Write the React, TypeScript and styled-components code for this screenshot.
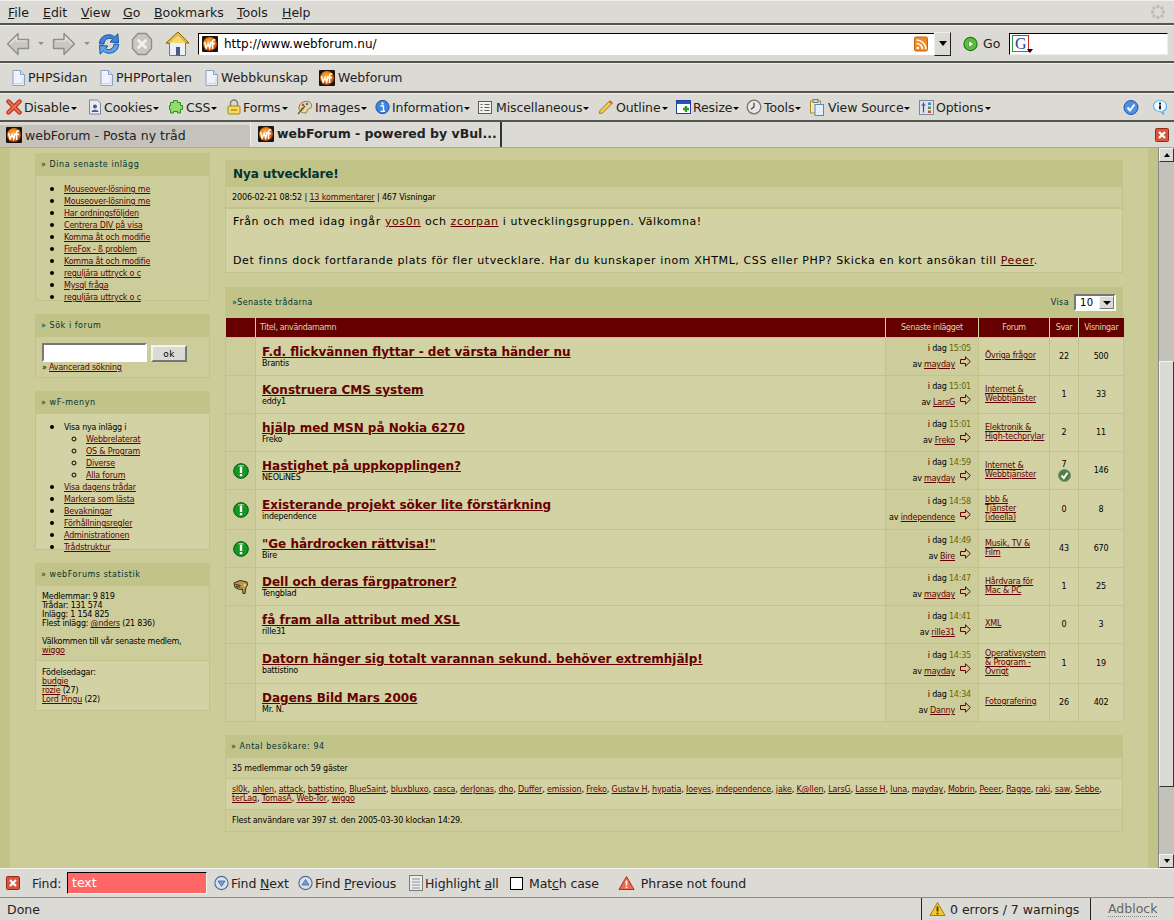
import React from "react";
import styled, { createGlobalStyle } from "styled-components";

const GlobalStyle = createGlobalStyle`
  html, body {
    margin: 0;
    padding: 0;
    height: 100%;
    overflow: hidden;
    background: #dcdad5;
    font-family: "DejaVu Sans", Verdana, sans-serif;
  }
`;

const Favicon: React.FC<{ size?: number }> = ({ size = 16 }) => (
  <svg width={size} height={size} viewBox="0 0 16 16" style={{ flex: "none" }}>
    <defs>
      <radialGradient id="wfg" cx="0.45" cy="0.4" r="0.65">
        <stop offset="0" stopColor="#ffc23a" />
        <stop offset="0.7" stopColor="#e0620f" />
        <stop offset="1" stopColor="#8c2a08" />
      </radialGradient>
    </defs>
    <rect width="16" height="16" rx="1" fill="#1c1408" />
    <circle cx="8" cy="8" r="7" fill="url(#wfg)" />
    <path d="M2.5 6l1.6 6 2-4.5 1.6 4.5 1.5-6" fill="none" stroke="#fff" strokeWidth="1.5" />
    <path d="M10.6 13V5.5c0-1.4 1-1.9 2.6-1.7M9.4 7.6h3.6" fill="none" stroke="#fff" strokeWidth="1.5" />
  </svg>
);

const PageIcon = () => (
  <svg width="13" height="16" viewBox="0 0 13 16" style={{ flex: "none" }}>
    <path d="M1 .5h7.5l4 4v11H1z" fill="#eef3fb" stroke="#8ca0c4" />
    <path d="M8.5.5v4h4" fill="#cfdcf0" stroke="#8ca0c4" />
    <path d="M2.5 13.5h8.5V7" fill="none" stroke="#c6d5ee" />
  </svg>
);

const BackIcon: React.FC<{ flip?: boolean }> = ({ flip }) => (
  <svg width="24" height="26" viewBox="0 0 24 26" style={flip ? { transform: "scaleX(-1)" } : undefined}>
    <path d="M1.5 13L12 2.5v6h10.5v9H12v6z" fill="#c9c7c1" stroke="#8f8e89" strokeWidth="1.4" strokeLinejoin="round" />
    <path d="M4 13l6.5-6.5V10h10" fill="none" stroke="#e6e5e1" strokeWidth="1.2" />
  </svg>
);

const ReloadIcon = () => (
  <svg width="24" height="26" viewBox="0 0 24 26">
    <path d="M2.5 13C2.500 7 7 3.500 12.500 3.800c2.300.1 3.700.9 5.200 2.100L20.800 2.800 21.500 11.500 13 11 15.700 8.400c-3.800-2.500-8.500-.4-8.700 4.600z" fill="#3c84dc" stroke="#1b4f9c" strokeWidth="1" strokeLinejoin="round" />
    <path d="M21.500 13c0 6-4.500 9.500-10 9.200-2.300-.1-3.700-.9-5.200-2.100L3.200 23.200 2.500 14.500 11 15l-2.700 2.600c3.800 2.500 8.500.4 8.700-4.600z" fill="#5aa5ee" stroke="#1b4f9c" strokeWidth="1" strokeLinejoin="round" />
  </svg>
);

const StopIcon = () => (
  <svg width="22" height="24" viewBox="0 0 22 24">
    <path d="M7 1.500h8L20.500 7.500v9L15 22.500H7L1.500 16.500v-9z" fill="#c9c7c1" stroke="#8f8e89" strokeWidth="1.4" />
    <path d="M7.500 8.500l7 7M14.500 8.500l-7 7" stroke="#f2f1ee" strokeWidth="2.800" strokeLinecap="round" />
  </svg>
);

const HomeIcon = () => (
  <svg width="25" height="28" viewBox="0 0 25 28">
    <path d="M4.500 12v13.500h16V12" fill="#eef0f6" stroke="#6f7690" />
    <rect x="11" y="17" width="4" height="8.500" fill="#4a5a80" />
    <path d="M1 13L13 2l11 11-3 0-8-7.500L4 13.500z" fill="#e9c03d" stroke="#7d6415" strokeLinejoin="round" />
    <path d="M4 13l9-8 8 8z" fill="#f3d873" />
  </svg>
);

const RssIcon = () => (
  <svg width="14" height="16" viewBox="0 0 14 16">
    <rect x="0.500" y="1" width="13" height="14" rx="1.500" fill="#f08a24" stroke="#c56412" />
    <circle cx="3.800" cy="12" r="1.300" fill="#fff" />
    <path d="M2.500 7.500a6 6 0 016 5.800M2.500 4a9.500 9.500 0 019.500 9.300" fill="none" stroke="#fff" strokeWidth="1.600" />
  </svg>
);

const GoIcon = () => (
  <svg width="15" height="16" viewBox="0 0 15 16">
    <circle cx="7.500" cy="8" r="6.600" fill="#5cc23d" stroke="#267a1c" strokeWidth="1.200" />
    <path d="M5.700 4.500v7l5.200-3.500z" fill="#f3fbea" stroke="#267a1c" strokeWidth="0.600" />
  </svg>
);

const SpinnerIcon = () => (
  <svg width="16" height="16" viewBox="0 0 16 16" fill="#bdbbb5">
    <circle cx="8" cy="2.500" r="1.700" /><circle cx="12" cy="4" r="1.700" /><circle cx="13.500" cy="8" r="1.700" />
    <circle cx="12" cy="12" r="1.700" /><circle cx="8" cy="13.500" r="1.700" /><circle cx="4" cy="12" r="1.700" />
    <circle cx="2.500" cy="8" r="1.700" /><circle cx="4" cy="4" r="1.700" />
  </svg>
);

const DevIcon: React.FC<{ kind: string }> = ({ kind }) => {
  switch (kind) {
    case "disable":
      return (
        <svg width="16" height="16" viewBox="0 0 16 16">
          <path d="M2.500 2.500l11 11M13.500 2.500l-11 11" stroke="#b52c18" strokeWidth="4.400" strokeLinecap="round" />
          <path d="M2.500 2.500l11 11M13.500 2.500l-11 11" stroke="#ef6a4c" strokeWidth="2.400" strokeLinecap="round" />
        </svg>
      );
    case "cookies":
      return (
        <svg width="14" height="16" viewBox="0 0 14 16">
          <path d="M1.500 1h8l3 3v11h-11z" fill="#e8ecf6" stroke="#7a86a8" />
          <circle cx="7" cy="7.500" r="2" fill="#4b5d85" />
          <path d="M3.500 13c0-3 7-3 7 0z" fill="#4b5d85" />
        </svg>
      );
    case "css":
      return (
        <svg width="16" height="16" viewBox="0 0 16 16">
          <path d="M5.500 1.500h4v2h3v3h2v4h-2v3.500h-3v-1.500h-4V14H2.500v-3.500h-1v-4h1v-3h3z" fill="#8fdc6c" stroke="#2e8a24" strokeLinejoin="round" />
        </svg>
      );
    case "forms":
      return (
        <svg width="14" height="16" viewBox="0 0 14 16">
          <path d="M3.500 7V4.500a3.500 3.500 0 017 0V7" fill="none" stroke="#7b7b78" strokeWidth="1.400" />
          <rect x="1" y="7" width="12" height="8" rx="1" fill="#f4d860" stroke="#a78714" />
          <rect x="4" y="10" width="6" height="2" fill="#c8a520" />
        </svg>
      );
    case "images":
      return (
        <svg width="16" height="16" viewBox="0 0 16 16">
          <path d="M8 2.500c4-1 7 1.500 6.500 5-.4 2.500-3 1.500-4 3-.8 1.300 0 3.500-2.500 3.500C4 14 1.500 11 2 8s3-4.900 6-5.500z" fill="#ecd9a8" stroke="#8a7440" />
          <circle cx="6" cy="6" r="1.300" fill="#d9432a" /><circle cx="10" cy="5" r="1.300" fill="#3b77c8" />
          <circle cx="5" cy="10" r="1.300" fill="#46a336" /><path d="M1 15l7-8" stroke="#6b5a30" strokeWidth="1.300" />
        </svg>
      );
    case "info":
      return (
        <svg width="15" height="16" viewBox="0 0 15 16">
          <circle cx="7.500" cy="8" r="6.600" fill="#3f85e0" stroke="#1c4f9e" />
          <rect x="6.500" y="3.500" width="2" height="2" fill="#fff" /><path d="M5.500 7h3v5h1.500M5.500 12.300h4" stroke="#fff" strokeWidth="1.300" fill="none" />
        </svg>
      );
    case "misc":
      return (
        <svg width="16" height="16" viewBox="0 0 16 16">
          <rect x="0.500" y="2.500" width="13" height="12" fill="#f2f2f0" stroke="#5c5c5c" />
          <path d="M2.500 5.500h2m2 0h5M2.500 8.500h2m2 0h5M2.500 11.500h2m2 0h5" stroke="#5c5c5c" />
        </svg>
      );
    case "outline":
      return (
        <svg width="16" height="16" viewBox="0 0 16 16">
          <path d="M2 11.500L11.500 2l2.500 2.500L4.500 14 1.500 14.500z" fill="#f4cd4c" stroke="#9a7a16" />
          <path d="M11.500 2l2.500 2.500" stroke="#d9533a" strokeWidth="2" />
        </svg>
      );
    case "resize":
      return (
        <svg width="15" height="16" viewBox="0 0 15 16">
          <rect x="0.500" y="1.500" width="14" height="13" fill="#fff" stroke="#1f3fa8" />
          <rect x="1" y="2" width="13" height="3" fill="#2552c8" />
          <path d="M10 7v6M7 10h6" stroke="#2f9a2a" strokeWidth="2.400" />
        </svg>
      );
    case "tools":
      return (
        <svg width="16" height="16" viewBox="0 0 16 16">
          <circle cx="8" cy="8" r="6.800" fill="#e8e7e3" stroke="#77756f" strokeWidth="1.300" />
          <path d="M8 3.800V8L5 10.300" fill="none" stroke="#35342f" strokeWidth="1.100" />
        </svg>
      );
    case "source":
      return (
        <svg width="16" height="17" viewBox="0 0 16 17">
          <rect x="0.500" y="2" width="10" height="12" fill="#f6e6b0" stroke="#b08a24" />
          <rect x="3" y="0.500" width="5" height="3" fill="#d8d6d0" stroke="#7b7b78" />
          <rect x="5" y="5.500" width="8.500" height="11" fill="#e3eefb" stroke="#5a86c4" />
        </svg>
      );
    default:
      return (
        <svg width="15" height="16" viewBox="0 0 15 16">
          <rect x="0.500" y="1.500" width="14" height="14" fill="#dde4ef" stroke="#7c88a0" />
          <path d="M4.500 3.500v10M2.500 6h4" stroke="#36507c" strokeWidth="1.200" />
          <rect x="9" y="3.500" width="3" height="2.500" fill="#4a7fd0" /><rect x="9" y="7.500" width="3" height="2.500" fill="#4aa040" /><rect x="9" y="11.500" width="3" height="2.500" fill="#d04a3a" />
        </svg>
      );
  }
};

const CheckBadge = () => (
  <svg width="16" height="17" viewBox="0 0 16 17">
    <circle cx="8" cy="8.500" r="7" fill="#4f90e6" stroke="#1c58a8" />
    <path d="M4.500 8.500l2.500 3 4.500-6" fill="none" stroke="#fff" strokeWidth="2" />
  </svg>
);

const InfoBubble = () => (
  <svg width="16" height="17" viewBox="0 0 16 17">
    <path d="M8 1.500c3.800 0 6.500 2.400 6.500 5.700 0 2.500-1.500 4.300-3.800 5L12 15.500l-3.500-3C4.500 12.600 1.500 10.500 1.500 7.200 1.500 3.900 4.200 1.500 8 1.500z" fill="#eef8ff" stroke="#58b4ea" strokeWidth="1.200" />
    <rect x="7" y="3.600" width="2" height="2" fill="#1c1c1c" /><rect x="7" y="6.500" width="2" height="3.800" fill="#1c1c1c" />
  </svg>
);

const CloseBox: React.FC = () => (
  <svg width="14" height="14" viewBox="0 0 14 14">
    <rect x="0.500" y="0.500" width="13" height="13" rx="1" fill="#d9543c" stroke="#9a2a18" />
    <path d="M4 4l6 6M10 4l-6 6" stroke="#fff" strokeWidth="2.200" />
  </svg>
);

const ArrowCircle: React.FC<{ up?: boolean }> = ({ up }) => (
  <svg width="15" height="16" viewBox="0 0 15 16">
    <circle cx="7.500" cy="8" r="6.600" fill="#d6e0f0" stroke="#52688c" strokeWidth="1.100" />
    <path d={up ? "M7.500 4.500l3.500 5.500h-7z" : "M7.500 11.500L4 6h7z"} fill="#7c9cd0" stroke="#3c5a8c" strokeWidth="0.700" />
  </svg>
);

const HighlightIcon = () => (
  <svg width="14" height="16" viewBox="0 0 14 16">
    <rect x="0.500" y="0.500" width="13" height="15" fill="#ecebe8" stroke="#7a7a78" />
    <path d="M3 4h8M3 7h8M3 10h8M3 13h8" stroke="#8a92a6" />
  </svg>
);

const WarnIcon: React.FC<{ yellow?: boolean }> = ({ yellow }) => (
  <svg width="17" height="16" viewBox="0 0 17 16">
    <path d="M8.500 1.500L16 14.500H1z" fill={yellow ? "#f5c832" : "#f0694c"} stroke={yellow ? "#a07c10" : "#a8341e"} strokeLinejoin="round" />
    <path d="M8.500 5.500v5M8.500 11.800v1.400" stroke={yellow ? "#3c3008" : "#fff"} strokeWidth="1.700" />
  </svg>
);

const NewPostIcon = () => (
  <svg width="16" height="16" viewBox="0 0 16 16">
    <circle cx="8" cy="8" r="7.300" fill="#129a20" stroke="#0d4a18" strokeWidth="1" />
    <path d="M5 3a6 4 0 016 0" stroke="#9ee09e" fill="none" />
    <path d="M8 3.500v6.500" stroke="#fff" strokeWidth="2.400" />
    <rect x="6.800" y="11" width="2.400" height="2.300" fill="#fff" />
  </svg>
);

const HandIcon = () => (
  <svg width="16" height="16" viewBox="0 0 16 16">
    <path d="M1 4l6-2.500 7 1.500.5 3.500L13 8l-1 6.500h-2l-.5-4.500-3 .5L2 8.500z" fill="#b89a50" stroke="#3c2c10" />
    <path d="M2.500 5.500l5 1M3 7.500l4.500.8" stroke="#3c2c10" />
    <path d="M10.500 5l2.500.5-1 3z" fill="#f5e08a" />
  </svg>
);

const SolvedIcon = () => (
  <svg width="13" height="13" viewBox="0 0 13 13" style={{ display: "block", margin: "0 auto" }}>
    <circle cx="6.500" cy="6.500" r="6" fill="#4f7f47" stroke="#7c8f68" />
    <path d="M3.500 6.500l2.300 2.600 3.700-5.400" fill="none" stroke="#fff" strokeWidth="1.900" />
  </svg>
);

const LastPostArrow = () => (
  <svg width="11" height="11" viewBox="0 0 11 11" style={{ flex: "none", marginBottom: 7 }}>
    <path d="M.5 3.500h5V.8L10.300 5.500 5.500 10.200V7.500h-5z" fill="none" stroke="#660000" strokeWidth="1" />
  </svg>
);

const Shell = styled.div`
  width: 1174px;
  height: 920px;
  display: flex;
  flex-direction: column;
  overflow: hidden;
  background: #dcdad5;
  color: #000;
  font-size: 13px;
`;

const ChromeBar = styled.div<{ $h: number; $px?: number }>`
  height: ${p => p.$h}px;
  flex: none;
  display: flex;
  align-items: center;
  padding: 0 ${p => p.$px ?? 0}px;
  border-bottom: 2px solid #555550;
  box-sizing: content-box;
  position: relative;
  background: #dcdad5;
  border-top: 1px solid #f0efec;
  & svg {
    flex: none;
  }
`;

const MenuItem = styled.span<{ $w: number }>`
  width: ${p => p.$w}px;
  flex: none;
  font-size: 12.5px;
  color: #1a1a1a;
`;

const Grow = styled.div`
  flex: 1;
`;

const NavButton = styled.div<{ $w: number }>`
  width: ${p => p.$w}px;
  flex: none;
  display: flex;
  align-items: center;
`;

const DropTick = styled.span<{ $dark?: boolean }>`
  width: 0;
  height: 0;
  border-left: 3px solid transparent;
  border-right: 3px solid transparent;
  border-top: 3px solid ${p => (p.$dark ? "#000" : "#8f8e89")};
  display: inline-block;
  flex: none;
`;

const UrlBox = styled.div`
  width: 736px;
  height: 22px;
  flex: none;
  background: #fff;
  border: 1px solid #000;
  border-right: none;
  border-bottom-color: #fff;
  box-sizing: border-box;
  display: flex;
  align-items: center;
  padding: 0 6px 0 3px;
  gap: 6px;
  font-size: 12px;
`;

const UrlDrop = styled.div`
  width: 17px;
  height: 24px;
  flex: none;
  box-sizing: border-box;
  border: 1px solid;
  border-color: #f0efec #222 #222 #f0efec;
  display: flex;
  align-items: center;
  justify-content: center;
  & > span {
    border-left-width: 4px;
    border-right-width: 4px;
    border-top-width: 5px;
  }
`;

const GoLabel = styled.span`
  font-size: 12.5px;
  margin-left: 5px;
  color: #222;
`;

const SearchBox = styled.div`
  width: 159px;
  height: 22px;
  flex: none;
  margin-left: 9px;
  background: #fff;
  border: 1px solid #000;
  border-right-color: #eee;
  border-bottom-color: #eee;
  box-sizing: border-box;
  display: flex;
  align-items: center;
  padding-left: 2px;
`;

const GoogleMark = styled.span`
  width: 15px;
  height: 15px;
  border: 1px solid #2a9a3c;
  border-right-color: #d02a20;
  border-top-color: #3060c0;
  color: #1f3fb0;
  font-family: "Liberation Serif", serif;
  font-size: 16px;
  line-height: 15px;
  text-align: center;
  position: relative;
  &::after {
    content: "";
    position: absolute;
    right: -5px;
    bottom: -2px;
    border-left: 3px solid transparent;
    border-right: 3px solid transparent;
    border-top: 4px solid #000;
  }
`;

const Bookmark = styled.span<{ $w: number }>`
  width: ${p => p.$w}px;
  flex: none;
  display: flex;
  align-items: center;
  gap: 3px;
  font-size: 12.5px;
  color: #222;
`;

const DevItem = styled.span<{ $w: number }>`
  width: ${p => p.$w}px;
  flex: none;
  display: flex;
  align-items: center;
  gap: 2px;
  font-size: 12.5px;
  color: #222;
  letter-spacing: -0.1px;
`;

const DevCaret = styled(DropTick)`
  margin-left: -1px;
  margin-top: 2px;
`;

const TabRow = styled.div`
  height: 25px;
  flex: none;
  display: flex;
  align-items: flex-end;
  background: #dcdad5;
  border-bottom: 1px solid #a8a69f;
  box-sizing: content-box;
  position: relative;
`;

const Tab = styled.div<{ $active?: boolean }>`
  width: ${p => (p.$active ? 252 : 250)}px;
  height: ${p => (p.$active ? 25 : 22)}px;
  box-sizing: border-box;
  flex: none;
  display: flex;
  align-items: center;
  gap: 3px;
  padding-left: ${p => (p.$active ? 7 : 6)}px;
  padding-bottom: 2px;
  font-size: 12.5px;
  font-weight: ${p => (p.$active ? 700 : 400)};
  background: ${p => (p.$active ? "#dcdad5" : "#c4c2bb")};
  border-right: ${p => (p.$active ? "2px solid #333" : "none")};
  border-left: ${p => (p.$active ? "1px solid #f0efec" : "none")};
  color: #222;
`;

const TabClose = styled.div`
  margin-left: auto;
  margin-right: 5px;
  align-self: center;
  display: flex;
`;

const Viewport = styled.div`
  flex: 1;
  min-height: 0;
  display: flex;
  overflow: hidden;
`;

const PageArea = styled.div`
  flex: 1;
  display: flex;
  align-items: flex-start;
  background: #cccc99;
  border-left: 10px solid #c2c388;
  border-right: 10px solid #c2c388;
  padding: 5px 25px 0;
  gap: 15px;
  overflow: hidden;
  font-size: 8px;
  color: #000;
`;

const Sidebar = styled.div`
  width: 175px;
  flex: none;
  display: flex;
  flex-direction: column;
  gap: 13px;
`;

const MainColumn = styled.div`
  width: 898px;
  flex: none;
  margin-top: 7px;
  display: flex;
  flex-direction: column;
  gap: 14px;
`;

const Box = styled.div``;

const VisitorBox = styled.div`
  margin-top: -1px;
`;

const BoxHead = styled.div<{ $h?: number }>`
  height: ${p => p.$h ?? 23}px;
  box-sizing: border-box;
  background: #c2c388;
  padding: 0 6px;
  display: flex;
  align-items: center;
  color: #003333;
  font-size: 8px;
  letter-spacing: 0.55px;
`;

const BoxBody = styled.div<{ $h: number; $light?: boolean; $pad?: string }>`
  height: ${p => p.$h}px;
  box-sizing: border-box;
  background: ${p => (p.$light ? "#d2d2a4" : "#cdcd9b")};
  border: 1px solid #c2c388;
  border-top: none;
  padding: ${p => p.$pad ?? "0 6px"};
  line-height: 9px;
  letter-spacing: -0.2px;
  white-space: nowrap;
`;

const ForumLink = styled.a`
  color: #660000;
  text-decoration: underline;
`;

const SideList = styled.ul`
  margin: 0;
  padding: 7px 0 0 28px;
  list-style: disc;
  line-height: 11px;
  letter-spacing: -0.2px;
  & li::marker {
    font-size: 12px;
  }
  & ul {
    margin: 0;
    padding-left: 22px;
    list-style: circle;
  }
`;

const SearchRow = styled.div`
  display: flex;
  align-items: flex-end;
  gap: 4px;
  height: 19px;
`;

const SearchInput = styled.input`
  width: 105px;
  height: 19px;
  box-sizing: border-box;
  background: #fff;
  border: 2px solid;
  border-color: #777 #fff #fff #777;
  padding: 0;
  outline: none;
`;

const OkButton = styled.button`
  width: 36px;
  height: 17px;
  box-sizing: border-box;
  background: #dcdad5;
  border: 2px solid;
  border-color: #f4f4f0 #777 #777 #f4f4f0;
  font: 9px "DejaVu Sans", sans-serif;
  letter-spacing: 0.5px;
  padding: 0;
  color: #000;
`;

const AdvancedRow = styled.div`
  margin-top: 1px;
`;

const NewsTitle = styled.div`
  height: 27px;
  background: #c2c388;
  display: flex;
  align-items: center;
  padding-left: 8px;
  color: #003333;
  font-size: 12px;
  font-weight: 700;
  letter-spacing: -0.1px;
`;

const NewsBody = styled.div`
  height: 65px;
  box-sizing: border-box;
  background: #d2d2a4;
  border: 1px solid #c2c388;
  padding: 3px 7px;
  font-size: 11px;
  line-height: 19.500px;
  letter-spacing: 0.6px;
  white-space: nowrap;
`;

const MetaRow = styled.div<{ $h: number; $light?: boolean; $ls?: number }>`
  height: ${p => p.$h}px;
  box-sizing: border-box;
  background: ${p => (p.$light ? "#d2d2a4" : "#cdcd9b")};
  border: 1px solid #c2c388;
  border-top: none;
  padding: 0 6px;
  display: flex;
  align-items: center;
  letter-spacing: ${p => p.$ls ?? -0.13}px;
  white-space: nowrap;
  line-height: 9px;
`;

const ThreadHead = styled.div`
  height: 31px;
  background: #c2c388;
  display: flex;
  align-items: center;
  justify-content: space-between;
  padding: 0 7px;
  color: #003333;
  letter-spacing: 0.4px;
`;

const ShowBox = styled.div`
  display: flex;
  align-items: center;
  gap: 5px;
`;

const SelectBox = styled.div`
  width: 42px;
  height: 17px;
  box-sizing: border-box;
  background: #fff;
  border: 2px solid;
  border-color: #777 #fff #fff #777;
  display: flex;
  align-items: center;
  justify-content: space-between;
  color: #000;
  font-size: 10px;
  padding-left: 4px;
`;

const SelectArrow = styled.span`
  width: 15px;
  height: 13px;
  box-sizing: border-box;
  background: #dcdad5;
  border: 1px solid;
  border-color: #f4f4f0 #777 #777 #f4f4f0;
  display: flex;
  align-items: center;
  justify-content: center;
  & > span {
    border-left-width: 4px;
    border-right-width: 4px;
    border-top-width: 4px;
  }
`;

const ThreadTable = styled.table`
  width: 898px;
  table-layout: fixed;
  border-collapse: collapse;
  letter-spacing: -0.2px;
`;

const HeadCell = styled.th<{ $left?: boolean }>`
  height: 19px;
  padding: 0 ${p => (p.$left ? "4px" : "0")};
  background: #660000;
  color: #d8d8a8;
  font-weight: 400;
  font-size: 8px;
  letter-spacing: -0.35px;
  text-align: ${p => (p.$left ? "left" : "center")};
  border-left: 1px solid #d2d2a4;
  &:first-child {
    border-left: none;
  }
`;

const ThreadRow = styled.tr<{ $h: number }>`
  height: ${p => p.$h}px;
`;

const Cell = styled.td<{ $center?: boolean }>`
  padding: 0;
  background: #d2d2a4;
  border: 1px solid #c2c388;
  text-align: ${p => (p.$center ? "center" : "left")};
  vertical-align: middle;
  line-height: 9px;
  overflow: hidden;
  white-space: nowrap;
`;

const IconCell = styled(Cell)`
  background: #cdcd9b;
  text-align: center;
  line-height: 0;
`;

const TitleCell = styled(Cell)`
  padding-left: 6px;
`;

const ThreadTitle = styled.a`
  display: block;
  width: max-content;
  color: #660000;
  font-size: 12px;
  font-weight: 700;
  line-height: 12px;
  letter-spacing: 0;
  text-decoration: underline;
`;

const ThreadAuthor = styled.div`
  line-height: 8px;
  margin-top: 2px;
`;

const LastCell = styled(Cell)`
  background: #cdcd9b;
  padding-right: 7px;
  text-align: right;
`;

const LastTime = styled.div`
  line-height: 10px;
  margin-top: 1px;
`;

const Clock = styled.span`
  color: #666600;
`;

const LastBy = styled.div`
  display: flex;
  justify-content: flex-end;
  align-items: center;
  gap: 5px;
  margin-top: 5px;
  height: 12px;
`;

const ForumCell = styled(Cell)`
  padding: 0 0 2px 6px;
`;

const CountCell = styled(Cell)`
  background: #d2d2a4;
  text-align: center;
`;

const SideBirthdays = styled.div`
  box-sizing: border-box;
  height: 50px;
  background: #d2d2a4;
  border: 1px solid #c2c388;
  border-top: none;
  padding: 7px 6px 0;
  line-height: 9px;
  letter-spacing: -0.2px;
`;

const PageScroll = styled.div`
  width: 16px;
  flex: none;
  display: flex;
  flex-direction: column;
  background: #c3c1ba;
  border-left: 1px solid #8a8a86;
  box-sizing: border-box;
`;

const ScrollBtn = styled.div`
  height: 14px;
  flex: none;
  background: #dcdad5;
  border: 1px solid;
  border-color: #f4f4f0 #333 #333 #f4f4f0;
  box-sizing: border-box;
  display: flex;
  align-items: center;
  justify-content: center;
  & > span {
    border-left-width: 3px;
    border-right-width: 3px;
    border-top-width: 4px;
  }
`;

const ScrollBtnUp = styled(ScrollBtn)`
  & > span {
    transform: rotate(180deg);
  }
`;

const ScrollGap = styled.div<{ $h?: number }>`
  height: ${p => (p.$h ? `${p.$h}px` : "auto")};
  flex: ${p => (p.$h ? "none" : 1)};
`;

const ScrollThumb = styled.div`
  height: 426px;
  flex: none;
  box-sizing: border-box;
  background: #dcdad5;
  border: 1px solid;
  border-color: #f4f4f0 #333 #333 #f4f4f0;
`;

const FindBar = styled.div`
  height: 28px;
  flex: none;
  display: flex;
  align-items: center;
  background: #dcdad5;
  border-top: 1px solid #f4f4f0;
  border-bottom: 1px solid #8a8a86;
  font-size: 12.5px;
  color: #222;
  padding-left: 6px;
`;

const FindItem = styled.span<{ $w: number; $pl?: number }>`
  width: ${p => p.$w}px;
  padding-left: ${p => p.$pl ?? 0}px;
  box-sizing: border-box;
  flex: none;
  display: flex;
  align-items: center;
  gap: 2px;
  letter-spacing: -0.1px;
`;

const FindInput = styled.div`
  width: 140px;
  height: 22px;
  flex: none;
  box-sizing: border-box;
  background: #ff6666;
  color: #fff;
  border: 1px solid #000;
  border-right-color: #f4f4f0;
  border-bottom-color: #f4f4f0;
  padding: 2px 4px;
  font-size: 12.5px;
  line-height: 16px;
`;

const CheckSquare = styled.span`
  width: 13px;
  height: 13px;
  flex: none;
  box-sizing: border-box;
  background: #fff;
  border: 1px solid #000;
  margin-right: 4px;
`;

const StatusBar = styled.div`
  height: 22px;
  flex: none;
  display: flex;
  align-items: stretch;
  font-size: 12.5px;
  color: #222;
  background: #dcdad5;
`;

const StatusCell = styled.div<{ $w?: number }>`
  ${p => (p.$w ? `width: ${p.$w}px; flex: none;` : "flex: 1;")}
  box-sizing: border-box;
  display: flex;
  align-items: center;
  padding-left: 7px;
  gap: 4px;
  border-left: ${p => (p.$w ? "1px solid #222" : "none")};
`;

const AdblockText = styled.span`
  color: #66655f;
  margin-left: 10px;
  border-bottom: 1px dotted #8a8a86;
  line-height: 14px;
`;

const menu = [
  ["F", "ile", 35],
  ["E", "dit", 38],
  ["V", "iew", 42],
  ["G", "o", 31],
  ["B", "ookmarks", 83],
  ["T", "ools", 45],
  ["H", "elp", 30],
] as const;

const devItems = [
  ["disable", "Disable", 82],
  ["cookies", "Cookies", 80],
  ["css", "CSS", 59],
  ["forms", "Forms", 70],
  ["images", "Images", 78],
  ["info", "Information", 103],
  ["misc", "Miscellaneous", 120],
  ["outline", "Outline", 78],
  ["resize", "Resize", 70],
  ["tools", "Tools", 64],
  ["source", "View Source", 109],
  ["options", "Options", 120],
] as const;

const recent = [
  "Mouseover-lösning me",
  "Mouseover-lösning me",
  "Har ordningsföljden",
  "Centrera DIV på visa",
  "Komma åt och modifie",
  "FireFox - ß problem",
  "Komma åt och modifie",
  "reguljära uttryck o c",
  "Mysql fråga",
  "reguljära uttryck o c",
];

type Thread = {
  h: number;
  icon?: "new" | "hand";
  title: string;
  author: string;
  time: string;
  by: string;
  forum: string[];
  replies: string;
  views: string;
  solved?: boolean;
};

const threads: Thread[] = [
  { h: 38, title: "F.d. flickvännen flyttar - det värsta händer nu", author: "Brantis", time: "15:05", by: "mayday", forum: ["Övriga frågor"], replies: "22", views: "500" },
  { h: 38, title: "Konstruera CMS system", author: "eddy1", time: "15:01", by: "LarsG", forum: ["Internet &", "Webbtjänster"], replies: "1", views: "33" },
  { h: 38, title: "hjälp med MSN på Nokia 6270", author: "Freko", time: "15:01", by: "Freko", forum: ["Elektronik &", "High-techprylar"], replies: "2", views: "11" },
  { h: 38, icon: "new", title: "Hastighet på uppkopplingen?", author: "NEOLiNES", time: "14:59", by: "mayday", forum: ["Internet &", "Webbtjänster"], replies: "7", views: "146", solved: true },
  { h: 40, icon: "new", title: "Existerande projekt söker lite förstärkning", author: "independence", time: "14:58", by: "independence", forum: ["bbb &", "Tjänster", "(ideella)"], replies: "0", views: "8" },
  { h: 38, icon: "new", title: "\"Ge hårdrocken rättvisa!\"", author: "Bire", time: "14:49", by: "Bire", forum: ["Musik, TV &", "Film"], replies: "43", views: "670" },
  { h: 38, icon: "hand", title: "Dell och deras färgpatroner?", author: "Tengblad", time: "14:47", by: "mayday", forum: ["Hårdvara för", "Mac & PC"], replies: "1", views: "25" },
  { h: 38, title: "få fram alla attribut med XSL", author: "rille31", time: "14:41", by: "rille31", forum: ["XML"], replies: "0", views: "3" },
  { h: 40, title: "Datorn hänger sig totalt varannan sekund. behöver extremhjälp!", author: "battistino", time: "14:35", by: "mayday", forum: ["Operativsystem", "& Program -", "Övrigt"], replies: "1", views: "19" },
  { h: 38, title: "Dagens Bild Mars 2006", author: "Mr. N.", time: "14:34", by: "Danny", forum: ["Fotografering"], replies: "26", views: "402" },
];

const visitors = [
  "sl0k", "ahlen", "attack", "battistino", "BlueSaint", "bluxbluxo", "casca", "derJonas", "dho", "Duffer",
  "emission", "Freko", "Gustav H", "hypatia", "Ioeyes", "independence", "jake", "K@llen", "LarsG", "Lasse H",
  "luna", "mayday", "Mobrin", "Peeer", "Ragge", "raki", "saw", "Sebbe",
];

const visitors2 = ["terLaq", "TomasA", "Web-Tor", "wiggo"];

const App: React.FC = () => {
  return (
    <Shell>
      <GlobalStyle />
      <ChromeBar $h={22} $px={8}>
        {menu.map(([key, rest, w]) => (
          <MenuItem $w={w} key={key}>
            <u>{key}</u>
            {rest}
          </MenuItem>
        ))}
        <Grow />
        <SpinnerIcon />
      </ChromeBar>
      <ChromeBar $h={35} $px={6}>
        <NavButton $w={32}><BackIcon /></NavButton>
        <NavButton $w={14}><DropTick /></NavButton>
        <NavButton $w={32}><BackIcon flip /></NavButton>
        <NavButton $w={13}><DropTick /></NavButton>
        <NavButton $w={34}><ReloadIcon /></NavButton>
        <NavButton $w={34}><StopIcon /></NavButton>
        <NavButton $w={33}><HomeIcon /></NavButton>
        <UrlBox>
          <Favicon />
          <span>http://www.webforum.nu/</span>
          <Grow />
          <RssIcon />
        </UrlBox>
        <UrlDrop><DropTick $dark /></UrlDrop>
        <NavButton $w={12} />
        <GoIcon />
        <GoLabel>Go</GoLabel>
        <SearchBox><GoogleMark>G</GoogleMark></SearchBox>
      </ChromeBar>
      <ChromeBar $h={27} $px={12}>
        <Bookmark $w={88}><PageIcon /><span>PHPSidan</span></Bookmark>
        <Bookmark $w={105}><PageIcon /><span>PHPPortalen</span></Bookmark>
        <Bookmark $w={114}><PageIcon /><span>Webbkunskap</span></Bookmark>
        <Bookmark $w={90}><Favicon /><span>Webforum</span></Bookmark>
      </ChromeBar>
      <ChromeBar $h={26} $px={6}>
        {devItems.map(([kind, label, w]) => (
          <DevItem $w={w} key={kind}>
            <DevIcon kind={kind} />
            <span>{label}</span>
            <DevCaret $dark />
          </DevItem>
        ))}
        <Grow />
        <CheckBadge />
        <NavButton $w={13} />
        <InfoBubble />
      </ChromeBar>
      <TabRow>
        <Tab><Favicon /><span>webForum - Posta ny tråd</span></Tab>
        <Tab $active><Favicon /><span>webForum - powered by vBul...</span></Tab>
        <Grow />
        <TabClose><CloseBox /></TabClose>
      </TabRow>
      <Viewport>
        <PageArea>
          <Sidebar>
            <Box>
              <BoxHead>» Dina senaste inlägg</BoxHead>
              <BoxBody $h={125} $pad="0">
                <SideList>
                  {recent.map((item, i) => (
                    <li key={i}><ForumLink>{item}</ForumLink></li>
                  ))}
                </SideList>
              </BoxBody>
            </Box>
            <Box>
              <BoxHead>» Sök i forum</BoxHead>
              <BoxBody $h={41} $pad="6px 6px 0">
                <SearchRow>
                  <SearchInput />
                  <OkButton>ok</OkButton>
                </SearchRow>
                <AdvancedRow>» <ForumLink>Avancerad sökning</ForumLink></AdvancedRow>
              </BoxBody>
            </Box>
            <Box>
              <BoxHead>» wF-menyn</BoxHead>
              <BoxBody $h={136} $light $pad="0">
                <SideList>
                  <li>
                    Visa nya inlägg i
                    <ul>
                      <li><ForumLink>Webbrelaterat</ForumLink></li>
                      <li><ForumLink>OS &amp; Program</ForumLink></li>
                      <li><ForumLink>Diverse</ForumLink></li>
                      <li><ForumLink>Alla forum</ForumLink></li>
                    </ul>
                  </li>
                  <li><ForumLink>Visa dagens trådar</ForumLink></li>
                  <li><ForumLink>Markera som lästa</ForumLink></li>
                  <li><ForumLink>Bevakningar</ForumLink></li>
                  <li><ForumLink>Förhållningsregler</ForumLink></li>
                  <li><ForumLink>Administrationen</ForumLink></li>
                  <li><ForumLink>Trådstruktur</ForumLink></li>
                </SideList>
              </BoxBody>
            </Box>
            <Box>
              <BoxHead>» webForums statistik</BoxHead>
              <BoxBody $h={75} $pad="6px 6px 0">
                Medlemmar: 9 819<br />
                Trådar: 131 574<br />
                Inlägg: 1 154 825<br />
                Flest inlägg: <ForumLink>@nders</ForumLink> (21 836)<br />
                <br />
                Välkommen till vår senaste medlem,<br />
                <ForumLink>wiggo</ForumLink>
              </BoxBody>
              <SideBirthdays>
                Födelsedagar:<br />
                <ForumLink>budgie</ForumLink><br />
                <ForumLink>rozie</ForumLink> (27)<br />
                <ForumLink>Lord Pingu</ForumLink> (22)
              </SideBirthdays>
            </Box>
          </Sidebar>
          <MainColumn>
            <Box>
              <NewsTitle>Nya utvecklare!</NewsTitle>
              <MetaRow $h={21}>
                2006-02-21 08:52 |&nbsp;<ForumLink>13 kommentarer</ForumLink>&nbsp;| 467 Visningar
              </MetaRow>
              <NewsBody>
                Från och med idag ingår <ForumLink>yos0n</ForumLink> och <ForumLink>zcorpan</ForumLink> i utvecklingsgruppen. Välkomna!<br />
                <br />
                Det finns dock fortfarande plats för fler utvecklare. Har du kunskaper inom XHTML, CSS eller PHP? Skicka en kort ansökan till <ForumLink>Peeer</ForumLink>.
              </NewsBody>
            </Box>
            <Box>
              <ThreadHead>
                <span>»Senaste trådarna</span>
                <ShowBox>
                  <span>Visa</span>
                  <SelectBox>
                    10
                    <SelectArrow><DropTick $dark /></SelectArrow>
                  </SelectBox>
                </ShowBox>
              </ThreadHead>
              <ThreadTable>
                <colgroup>
                  <col width="30" />
                  <col width="630" />
                  <col width="93" />
                  <col width="71" />
                  <col width="29" />
                  <col width="45" />
                </colgroup>
                <thead>
                  <tr>
                    <HeadCell />
                    <HeadCell $left>Titel, användarnamn</HeadCell>
                    <HeadCell>Senaste inlägget</HeadCell>
                    <HeadCell>Forum</HeadCell>
                    <HeadCell>Svar</HeadCell>
                    <HeadCell>Visningar</HeadCell>
                  </tr>
                </thead>
                <tbody>
                  {threads.map(t => (
                    <ThreadRow $h={t.h} key={t.title}>
                      <IconCell>
                        {t.icon === "new" && <NewPostIcon />}
                        {t.icon === "hand" && <HandIcon />}
                      </IconCell>
                      <TitleCell>
                        <ThreadTitle>{t.title}</ThreadTitle>
                        <ThreadAuthor>{t.author}</ThreadAuthor>
                      </TitleCell>
                      <LastCell>
                        <LastTime>i dag <Clock>{t.time}</Clock></LastTime>
                        <LastBy>
                          <span>av <ForumLink>{t.by}</ForumLink></span>
                          <LastPostArrow />
                        </LastBy>
                      </LastCell>
                      <ForumCell>
                        {t.forum.map(line => (
                          <div key={line}><ForumLink>{line}</ForumLink></div>
                        ))}
                      </ForumCell>
                      <CountCell>
                        {t.replies}
                        {t.solved && <SolvedIcon />}
                      </CountCell>
                      <CountCell>{t.views}</CountCell>
                    </ThreadRow>
                  ))}
                </tbody>
              </ThreadTable>
            </Box>
            <VisitorBox>
              <BoxHead>» Antal besökare: 94</BoxHead>
              <MetaRow $h={21}>35 medlemmar och 59 gäster</MetaRow>
              <MetaRow $h={31} $light $ls={-0.14}>
                <div>
                  {visitors.map(v => (
                    <React.Fragment key={v}><ForumLink>{v}</ForumLink>, </React.Fragment>
                  ))}
                  <br />
                  {visitors2.map((v, i) => (
                    <React.Fragment key={v}><ForumLink>{v}</ForumLink>{i < visitors2.length - 1 ? ", " : ""}</React.Fragment>
                  ))}
                </div>
              </MetaRow>
              <MetaRow $h={22}>Flest användare var 397 st. den 2005-03-30 klockan 14:29.</MetaRow>
            </VisitorBox>
          </MainColumn>
        </PageArea>
        <PageScroll>
          <ScrollBtnUp><DropTick $dark /></ScrollBtnUp>
          <ScrollGap $h={199} />
          <ScrollThumb />
          <ScrollGap />
          <ScrollBtn><DropTick $dark /></ScrollBtn>
        </PageScroll>
      </Viewport>
      <FindBar>
        <FindItem $w={26}><CloseBox /></FindItem>
        <FindItem $w={35}>Find:</FindItem>
        <FindInput>text</FindInput>
        <FindItem $w={91} $pl={7}><ArrowCircle /><span>Find <u>N</u>ext</span></FindItem>
        <FindItem $w={111}><ArrowCircle up /><span>Find <u>P</u>revious</span></FindItem>
        <FindItem $w={101}><HighlightIcon /><span>Highlight <u>a</u>ll</span></FindItem>
        <FindItem $w={108}><CheckSquare /><span>Mat<u>c</u>h case</span></FindItem>
        <FindItem $w={140}><WarnIcon /><span>&nbsp;Phrase not found</span></FindItem>
      </FindBar>
      <StatusBar>
        <StatusCell>Done</StatusCell>
        <StatusCell $w={169}><WarnIcon yellow /><span>0 errors / 7 warnings</span></StatusCell>
        <StatusCell $w={84}><AdblockText>Adblock</AdblockText></StatusCell>
      </StatusBar>
    </Shell>
  );
};

export default App;
